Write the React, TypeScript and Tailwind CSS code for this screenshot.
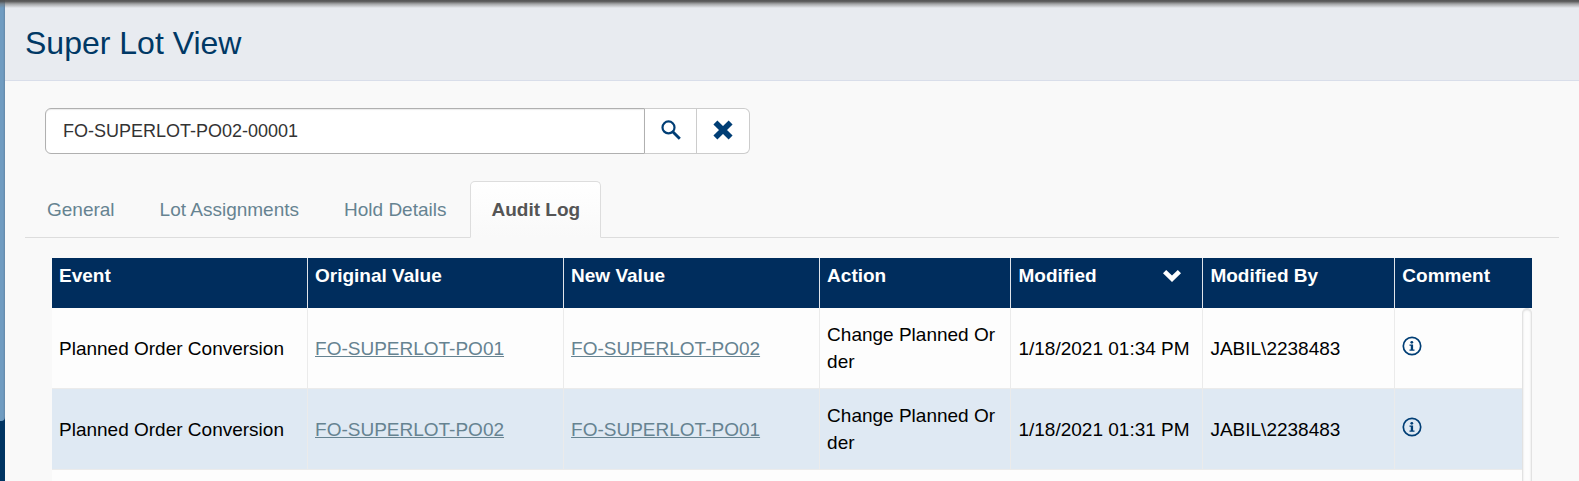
import React from "react";

type Entry = {
  event: string;
  original: string;
  next: string;
  action: string;
  modified: string;
  by: string;
};

const entries: Entry[] = [
  {
    event: "Planned Order Conversion",
    original: "FO-SUPERLOT-PO01",
    next: "FO-SUPERLOT-PO02",
    action: "Change Planned Order",
    modified: "1/18/2021 01:34 PM",
    by: "JABIL\\2238483",
  },
  {
    event: "Planned Order Conversion",
    original: "FO-SUPERLOT-PO02",
    next: "FO-SUPERLOT-PO01",
    action: "Change Planned Order",
    modified: "1/18/2021 01:31 PM",
    by: "JABIL\\2238483",
  },
];

const tabs = ["General", "Lot Assignments", "Hold Details", "Audit Log"];

function SearchIcon() {
  return (
    <svg className="size-5" viewBox="0 0 20 20" fill="none" stroke="currentColor" aria-hidden="true">
      <circle cx="7.5" cy="7.4" r="6" strokeWidth="2.2" />
      <path d="m11.8 11.7 7 7" strokeWidth="2.9" />
    </svg>
  );
}

function ClearIcon() {
  return (
    <svg className="size-5" viewBox="0 0 20 20" fill="none" stroke="currentColor" strokeWidth="5.6" aria-hidden="true">
      <path d="M2.4 2.4 17.6 17.6M17.6 2.4 2.4 17.6" />
    </svg>
  );
}

function ChevronIcon() {
  return (
    <svg className="h-3 w-[18px]" viewBox="0 0 18 12" fill="currentColor" aria-hidden="true">
      <path d="M3.2 0 9 5.6 14.8 0 18 3.2 9 12 0 3.2Z" />
    </svg>
  );
}

function InfoIcon() {
  return (
    <svg className="size-5" viewBox="0 0 20 20" aria-hidden="true">
      <circle cx="10" cy="10" r="8.7" fill="none" stroke="currentColor" strokeWidth="1.7" />
      <circle cx="9.8" cy="6.3" r="1.4" fill="currentColor" />
      <path d="M7.5 8.6h3.6v4.9h1.4v1.2H7.5v-1.2h1.3V9.8H7.5Z" fill="currentColor" />
    </svg>
  );
}

function HeadCell({ className, children }: { className: string; children: React.ReactNode }) {
  return (
    <th scope="col" className={`h-[50px] border-r border-[#e0e4ea] px-[7px] pt-1 text-left align-top font-bold last:border-r-0 ${className}`}>
      {children}
    </th>
  );
}

function Cell({ className = "", children }: { className?: string; children: React.ReactNode }) {
  return (
    <td className={`h-[81px] border-r border-b border-[#ebebeb] px-[7px] align-middle last:border-r-0 ${className}`}>
      {children}
    </td>
  );
}

export default function App() {
  return (
    <div className="relative flex min-h-screen overflow-hidden bg-[#f9f9f9] font-['Liberation_Sans',Arial,sans-serif] text-[19px] leading-[27px] text-black">
      <div className="w-[5px] shrink-0 bg-[#003462]">
        <div className="h-[421px] rounded-br-sm bg-linear-to-r from-[#709cc1] from-60% to-[#6488a8]" />
      </div>
      <div className="flex min-w-0 grow flex-col">
        <header className="flex h-[81px] items-center border-b border-[#d9deea] bg-[#e8ebf0] px-5 pt-1.5">
          <h1 className="text-[32px] leading-10 text-[#003865]">Super Lot View</h1>
        </header>
        <main className="flex grow flex-col px-5 pt-[27px]">
          <form className="ml-5 flex h-[46px] w-[705px] max-w-full" onSubmit={(e) => e.preventDefault()}>
            <input
              aria-label="Super lot"
              defaultValue="FO-SUPERLOT-PO02-00001"
              className="min-w-0 grow rounded-l-md border border-[#b0b0b0] bg-white px-[17px] text-[18px] text-[#333] shadow-[inset_0_1px_1px_rgba(0,0,0,0.08)] outline-none"
            />
            <button type="submit" aria-label="Search" className="flex w-[52px] items-center justify-center border-y border-r border-[#ccc] bg-white pb-0.5 text-[#003e75]">
              <SearchIcon />
            </button>
            <button type="reset" aria-label="Clear" className="flex w-[53px] items-center justify-center rounded-r-md border-y border-r border-[#ccc] bg-white pb-0.5 text-[#003e75]">
              <ClearIcon />
            </button>
          </form>
          <nav role="tablist" className="mt-[27px] flex gap-[3px] border-b border-[#ddd] pl-px">
            {tabs.map((tab) => (
              <button
                key={tab}
                type="button"
                role="tab"
                aria-selected={tab === "Audit Log"}
                className="-mb-px h-[57px] rounded-t-[5px] border border-transparent px-5 text-[#668391] aria-selected:border-[#ddd] aria-selected:border-b-[#f9f9f9] aria-selected:bg-linear-to-b aria-selected:from-white aria-selected:to-[#f9f9f9] aria-selected:font-bold aria-selected:text-[#555]"
              >
                {tab}
              </button>
            ))}
          </nav>
          <div className="relative mt-5 mr-[27px] ml-[27px] grow bg-[#fdfdfd]">
            <table className="w-full table-fixed border-separate border-spacing-0">
              <thead className="bg-[#002d5d] text-white">
                <tr>
                  <HeadCell className="w-[17.3%]">Event</HeadCell>
                  <HeadCell className="w-[17.3%]">Original Value</HeadCell>
                  <HeadCell className="w-[17.3%]">New Value</HeadCell>
                  <HeadCell className="w-[12.93%]">Action</HeadCell>
                  <HeadCell className="w-[12.97%]">
                    <button type="button" className="flex w-full items-center justify-between pr-3.5">
                      Modified
                      <ChevronIcon />
                    </button>
                  </HeadCell>
                  <HeadCell className="w-[12.97%]">Modified By</HeadCell>
                  <HeadCell className="">Comment</HeadCell>
                </tr>
              </thead>
              <tbody>
                {entries.map((entry) => (
                  <tr key={entry.modified} className="even:bg-[#dfe9f3]">
                    <Cell>{entry.event}</Cell>
                    <Cell>
                      <a href="#original" className="text-[#668391] underline">{entry.original}</a>
                    </Cell>
                    <Cell>
                      <a href="#new" className="text-[#668391] underline">{entry.next}</a>
                    </Cell>
                    <Cell className="break-all">{entry.action}</Cell>
                    <Cell className="whitespace-nowrap">{entry.modified}</Cell>
                    <Cell>{entry.by}</Cell>
                    <Cell>
                      <button type="button" aria-label="Show comment" className="block pb-1 text-[#003e75]">
                        <InfoIcon />
                      </button>
                    </Cell>
                  </tr>
                ))}
              </tbody>
            </table>
            <div className="absolute top-[50px] right-0 bottom-0 w-2.5 bg-[#fdfdfd]">
              <div className="h-full rounded-t-md border border-b-0 border-[#e2e2e2] bg-[#fdfdfd] shadow-[inset_0_1px_2px_rgba(0,0,0,0.15)]" />
            </div>
          </div>
        </main>
      </div>
      <div className="pointer-events-none absolute inset-x-0 top-0 h-2 bg-linear-to-b from-[#505050]/95 from-15% via-[#777]/60 via-50% to-transparent" />
    </div>
  );
}
